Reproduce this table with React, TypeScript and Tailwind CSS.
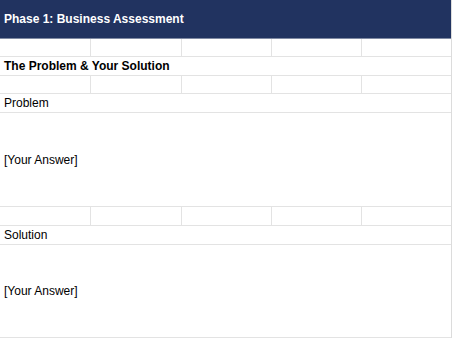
const cols = [0, 1, 2, 3, 4];

function EmptyRow({ h }: { h: string }) {
  return (
    <div className={`grid ${h} grid-cols-[91px_91px_90px_90px_1fr] border-b border-[#e3e3e3]`}>
      {cols.map((c) => (
        <div key={c} className={c < 4 ? 'border-r border-[#e3e3e3]' : ''} />
      ))}
    </div>
  );
}

function LabelRow({ text, h, bold }: { text: string; h: string; bold?: boolean }) {
  return (
    <div
      className={`flex ${h} items-center border-b border-[#e3e3e3] px-[4px] text-[12px] text-black ${bold ? 'font-bold' : ''}`}
    >
      {text}
    </div>
  );
}

function AnswerRow({ h }: { h: string }) {
  return (
    <div className={`flex ${h} items-center border-b border-[#e3e3e3] px-[4px] text-[12px] text-black`}>
      [Your Answer]
    </div>
  );
}

export default function App() {
  return (
    <div className="h-[339px] w-[453px] bg-white font-['Liberation_Sans',Arial,sans-serif]">
      <div className="w-[452px] border-r border-[#dcdcdc]">
        <div className="flex h-[39px] items-center border-b border-[#7f8aa3] bg-[#213360] px-[4px] text-[12px] font-bold text-white">
          Phase 1: Business Assessment
        </div>
        <EmptyRow h="h-[18px]" />
        <LabelRow text="The Problem & Your Solution" h="h-[19px]" bold />
        <EmptyRow h="h-[18px]" />
        <LabelRow text="Problem" h="h-[19px]" />
        <AnswerRow h="h-[94px]" />
        <EmptyRow h="h-[19px]" />
        <LabelRow text="Solution" h="h-[19px]" />
        <AnswerRow h="h-[93px]" />
      </div>
    </div>
  );
}
